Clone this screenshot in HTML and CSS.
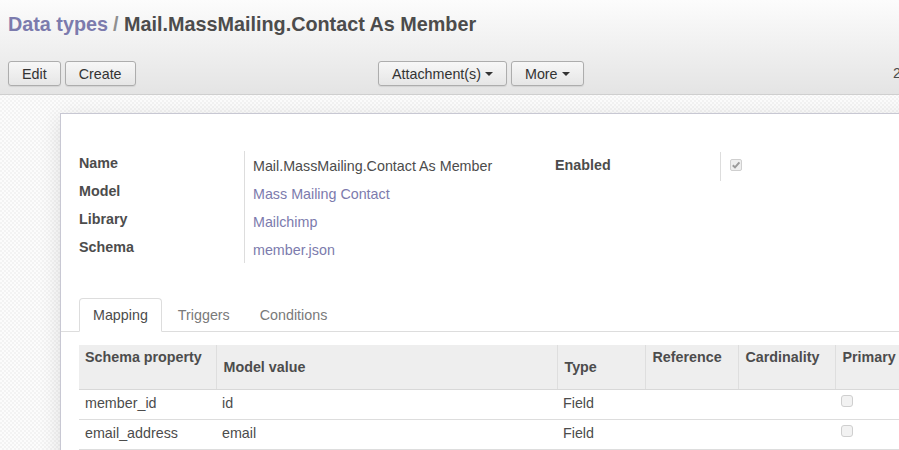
FILE: index.html
```html
<!DOCTYPE html>
<html>
<head>
<meta charset="utf-8">
<link rel="stylesheet" href="styles.css">
</head>
<body>
<div class="cp">
  <ol class="breadcrumb">
    <li><a class="crumb-link">Data types</a></li>
    <li class="crumb-active">Mail.MassMailing.Contact As Member</li>
  </ol>
  <div class="cp-row">
    <div class="cp-buttons">
      <button class="btn">Edit</button>
      <button class="btn">Create</button>
    </div>
    <div class="cp-sidebar">
      <button class="btn">Attachment(s) <span class="caret"></span></button>
      <button class="btn">More <span class="caret"></span></button>
    </div>
    <div class="cp-pager">2 / 2</div>
  </div>
</div>
<div class="content">
  <div class="sheet">
    <div class="groups">
      <div class="group">
        <div class="lbl">Name</div><div class="val">Mail.MassMailing.Contact As Member</div>
        <div class="lbl">Model</div><div class="val"><a class="link">Mass Mailing Contact</a></div>
        <div class="lbl">Library</div><div class="val"><a class="link">Mailchimp</a></div>
        <div class="lbl">Schema</div><div class="val"><a class="link">member.json</a></div>
      </div>
      <div class="group group-right">
        <div class="lbl lbl-right">Enabled</div>
        <div class="val val-check"><span class="cbox checked"><svg width="10" height="10" viewBox="0 0 10 10"><path d="M1.8 5.2 L4 7.4 L8.4 2.4" fill="none" stroke="#9a9a9a" stroke-width="2"/></svg></span></div>
      </div>
    </div>
    <ul class="tabs">
      <li class="tab active">Mapping</li>
      <li class="tab">Triggers</li>
      <li class="tab">Conditions</li>
    </ul>
    <table class="list">
      <colgroup>
        <col class="c1"><col class="c2"><col class="c3"><col class="c4"><col class="c5"><col class="c6">
      </colgroup>
      <thead>
        <tr>
          <th class="top">Schema property</th>
          <th class="mid">Model value</th>
          <th class="mid">Type</th>
          <th class="top">Reference</th>
          <th class="top">Cardinality</th>
          <th class="top">Primary</th>
        </tr>
      </thead>
      <tbody>
        <tr>
          <td>member_id</td><td>id</td><td>Field</td><td></td><td></td><td><span class="cbox"></span></td>
        </tr>
        <tr>
          <td>email_address</td><td>email</td><td>Field</td><td></td><td></td><td><span class="cbox"></span></td>
        </tr>
      </tbody>
    </table>
  </div>
</div>
</body>
</html>
```
FILE: styles.css
```css
html, body {
  margin: 0;
  padding: 0;
  overflow: hidden;
  width: 899px;
  height: 450px;
}
body {
  font-family: "Liberation Sans", Arial, sans-serif;
  font-size: 14.3px;
  line-height: 20px;
  color: #4c4c4c;
  background: repeating-conic-gradient(#f3f3f3 0 25%, #fcfcfc 0 50%) 0 0 / 4px 4px;
}
.cp {
  width: 1100px;
  height: 95px;
  box-sizing: border-box;
  padding: 10px 0 0 8px;
  background: linear-gradient(to bottom, #fcfcfc 0%, #f0f0f0 50%, #e4e4e4 100%);
  border-bottom: 1px solid #cfcfcf;
}
.breadcrumb {
  list-style: none;
  margin: 0;
  padding: 0;
  display: flex;
  font-size: 19.8px;
  line-height: 28px;
  font-weight: bold;
  height: 28px;
}
.breadcrumb li + li::before {
  content: "/\00a0";
  padding: 0 0 0 5px;
  color: #8f8f8f;
  font-weight: bold;
}
.crumb-link {
  color: #7c7bad;
}
.crumb-active {
  color: #4c4c4c;
}
.cp-row {
  margin-top: 23px;
  display: grid;
  grid-template-columns: 370px 515px auto;
  align-items: start;
}
.cp-buttons, .cp-sidebar {
  display: flex;
  gap: 4px;
}
.btn {
  font-family: inherit;
  font-size: 14.3px;
  color: #333;
  height: 25px;
  box-sizing: border-box;
  line-height: 22px;
  padding: 1px 13px 0 13px;
  margin: 0;
  border: 1px solid #adadad;
  border-radius: 3px;
  background: linear-gradient(to bottom, #f7f7f7, #e6e6e6);
  box-shadow: 0 1px 1px rgba(0,0,0,0.08);
  display: inline-flex;
  align-items: center;
}
.caret {
  display: inline-block;
  width: 0;
  height: 0;
  margin-left: 4px;
  border-top: 4.5px solid #333;
  border-left: 4px solid transparent;
  border-right: 4px solid transparent;
}
.cp-pager {
  line-height: 25px;
  color: #4c4c4c;
  white-space: nowrap;
}
.content {
  padding: 18px 0 0 60px;
}
.sheet {
  width: 1040px;
  height: 400px;
  box-sizing: border-box;
  background: #fff;
  border: 1px solid #c8c8d3;
  box-shadow: 0 5px 20px rgba(0,0,0,0.12);
  padding: 37px 18px 0 18px;
}
.groups {
  display: flex;
  align-items: flex-start;
}
.group {
  width: 476px;
  display: grid;
  grid-template-columns: 166px 1fr;
  grid-auto-rows: 28px;
}
.group-right {
  margin-top: 1px;
  grid-auto-rows: 29px;
}
.lbl {
  font-weight: bold;
  border-right: 1px solid #ddd;
  padding-top: 2px;
  box-sizing: border-box;
}
.lbl-right {
  padding-top: 3px;
}
.val {
  padding: 5px 0 0 8px;
  white-space: nowrap;
}
.val-check {
  padding: 7px 0 0 9px;
}
.link {
  color: #7c7bad;
}
.cbox {
  display: inline-flex;
  align-items: center;
  justify-content: center;
  width: 12px;
  height: 12px;
  box-sizing: border-box;
  border: 1px solid #cfcfcf;
  border-radius: 3px;
  background: #f2f2f2;
  vertical-align: top;
}
.cbox.checked {
  border-radius: 2px;
  background: #eeeeee;
}
.tabs {
  list-style: none;
  margin: 35px -18px 0 -18px;
  padding: 0 0 0 18px;
  display: flex;
  border-bottom: 1px solid #ddd;
  height: 33px;
}
.tab {
  padding: 6px 13px;
  margin: 0 2px -1px 0;
  border: 1px solid transparent;
  border-radius: 4px 4px 0 0;
  color: #7a7a7a;
  line-height: 20px;
}
.tab.active {
  color: #4c4c4c;
  background: #fff;
  border-color: #ddd;
  border-bottom-color: #fff;
}
.list {
  margin-top: 13px;
  border-collapse: collapse;
  table-layout: fixed;
  width: 856px;
}
.c1 { width: 137px; }
.c2 { width: 341px; }
.c3 { width: 88px; }
.c4 { width: 93px; }
.c5 { width: 97px; }
.c6 { width: 100px; }
.list thead tr {
  height: 44px;
  background: #eeeeee;
}
.list th {
  text-align: left;
  font-weight: bold;
  padding: 2px 6px 0 7px;
  border-left: 1px solid #dedede;
  border-bottom: 1px solid #d8d8d8;
  white-space: nowrap;
}
.list th:first-child {
  border-left: none;
  padding-left: 6px;
}
.list th.top {
  vertical-align: top;
}
.list th.mid {
  vertical-align: middle;
  padding-top: 0;
}
.list tbody tr {
  height: 30px;
}
.list td {
  padding: 3px 6px 0 6px;
  vertical-align: top;
  border-bottom: 1px solid #ddd;
  white-space: nowrap;
}
.list td .cbox {
  margin-top: 2px;
}
```
